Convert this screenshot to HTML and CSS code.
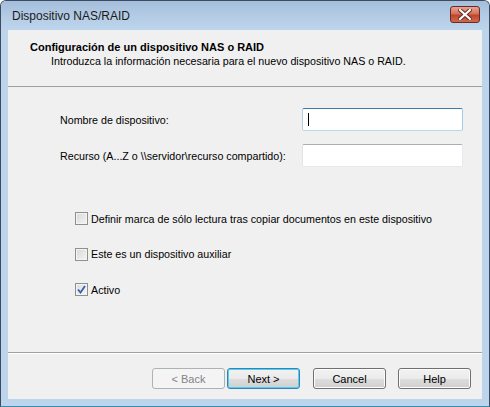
FILE: index.html
```html
<!DOCTYPE html>
<html lang="es">
<head>
    <meta charset="UTF-8">
    <title>Dispositivo NAS/RAID</title>
    <link rel="stylesheet" href="styles.css">
</head>
<body>

    <div class="window">
        <div class="titlebar">
            <span class="title">Dispositivo NAS/RAID</span>
            <button class="close-btn" type="button">
                <svg width="14" height="11" viewBox="0 0 14 11">
                    <path d="M2 1 L12 10 M12 1 L2 10" stroke="#5a2a22" stroke-width="4" stroke-linecap="square"/>
                    <path d="M2 1 L12 10 M12 1 L2 10" stroke="#ffffff" stroke-width="2.2" stroke-linecap="square"/>
                </svg>
            </button>
        </div>

        <div class="client">
            <div class="wizard-header">
                <div class="header-title">Configuración de un dispositivo NAS o RAID</div>
                <div class="header-sub">Introduzca la información necesaria para el nuevo dispositivo NAS o RAID.</div>
            </div>

            <div class="wizard-body">
                <div class="field-row">
                    <label for="name">Nombre de dispositivo:</label>
                    <div class="textbox focused" id="name"><span class="caret"></span></div>
                </div>
                <div class="field-row">
                    <label for="share">Recurso (A...Z o \\servidor\recurso compartido):</label>
                    <div class="textbox" id="share"></div>
                </div>

                <div class="checks">
                    <div class="check-row">
                        <span class="checkbox"></span>
                        <span>Definir marca de sólo lectura tras copiar documentos en este dispositivo</span>
                    </div>
                    <div class="check-row">
                        <span class="checkbox"></span>
                        <span>Este es un dispositivo auxiliar</span>
                    </div>
                    <div class="check-row">
                        <span class="checkbox checked">
                            <svg width="9" height="9" viewBox="0 0 9 9">
                                <path d="M1 4.5 L3.5 7.5 L8 1" fill="none" stroke="#3a5fb0" stroke-width="1.8"/>
                            </svg>
                        </span>
                        <span>Activo</span>
                    </div>
                </div>
            </div>

            <div class="wizard-footer">
                <button class="btn" type="button" disabled>&lt; Back</button>
                <button class="btn default" type="button">Next &gt;</button>
                <button class="btn gap" type="button">Cancel</button>
                <button class="btn gap" type="button">Help</button>
            </div>
        </div>
    </div>

</body>
</html>
```

FILE: styles.css
```css
body {
    margin: 0;
    background-color: #fff;
    font-family: "Liberation Sans", Arial, sans-serif;
    font-size: 10.7px;
    color: #000;
}

.window {
    box-sizing: border-box;
    width: 490px;
    height: 407px;
    border: 1px solid #3c4c60;
    border-bottom-color: #3a8fa8;
    border-radius: 6px 6px 0 0;
    background-color: #bcd4ec;
    display: flex;
    flex-direction: column;
    overflow: hidden;
}

.titlebar {
    height: 29px;
    flex: none;
    display: flex;
    align-items: center;
    padding: 0 9px 0 11px;
    background: linear-gradient(#a4bedb, #b6cde6 60%, #bcd4ec);
}

.title {
    flex: 1;
    font-size: 12px;
    color: #1a1a1a;
    padding-top: 1px;
}

.close-btn {
    width: 30px;
    height: 17px;
    margin-top: -3px;
    padding: 0;
    border: 1px solid #6a2a22;
    border-radius: 3px;
    background: linear-gradient(#e6a593, #d5705a 45%, #c0452c 55%, #d06a4e);
    display: flex;
    align-items: center;
    justify-content: center;
}

.client {
    flex: 1;
    margin: 0 7px 7px 7px;
    background-color: #f0f0f0;
    display: flex;
    flex-direction: column;
}

.wizard-header {
    height: 57px;
    flex: none;
    padding: 11px 0 0 22px;
    box-sizing: border-box;
    border-bottom: 1px solid #a0a0a0;
}

.header-title {
    font-weight: bold;
    font-size: 11px;
}

.header-sub {
    margin: 2px 0 0 21px;
}

.wizard-body {
    flex: 1;
    padding: 21px 19px 0 52px;
    border-bottom: 1px solid #a0a0a0;
}

.field-row {
    display: flex;
    align-items: center;
    justify-content: space-between;
    height: 23px;
    margin-bottom: 13px;
}

.textbox {
    box-sizing: border-box;
    width: 161px;
    height: 23px;
    background-color: #fff;
    border: 1px solid #abadb3;
    border-color: #abadb3 #e3e9ef #e3e9ef #e2e3ea;
    border-radius: 2px;
    display: flex;
    align-items: center;
    padding-left: 5px;
}

.textbox.focused {
    border-color: #3d7bad #a4c9e3 #b7d9ed #b5cfe7;
}

.caret {
    width: 1px;
    height: 13px;
    background-color: #000;
}

.checks {
    padding: 32px 0 0 15px;
    display: flex;
    flex-direction: column;
    gap: 22.5px;
}

.check-row {
    display: flex;
    align-items: center;
    gap: 3px;
    height: 13px;
}

.checkbox {
    box-sizing: border-box;
    width: 13px;
    height: 13px;
    border: 1px solid #8f8f8f;
    background: linear-gradient(135deg, #d8d8d8, #f4f4f4);
    box-shadow: inset 0 0 0 1px #f4f4f4;
    display: flex;
    align-items: center;
    justify-content: center;
}

.checkbox.checked {
    background: linear-gradient(135deg, #dcdcdc, #f6f6f6);
}

.wizard-footer {
    height: 46px;
    flex: none;
    display: flex;
    align-items: flex-start;
    padding: 14px 0 0 144px;
    box-sizing: border-box;
    border-top: 1px solid #fff;
}

.btn {
    box-sizing: border-box;
    width: 73px;
    height: 21px;
    margin-right: 2px;
    font-family: "Liberation Sans", Arial, sans-serif;
    font-size: 11px;
    color: #000;
    border: 1px solid #707070;
    border-radius: 3px;
    background: linear-gradient(#f2f2f2, #ebebeb 50%, #dddddd 51%, #cfcfcf);
    box-shadow: inset 0 0 0 1px #fcfcfc;
    padding: 0;
}

.btn.default {
    border-color: #3c7fb1;
    box-shadow: inset 0 0 0 1px #48d3f7;
}

.btn:disabled {
    color: #838383;
    border-color: #adb2b5;
    background: #f4f4f4;
    box-shadow: none;
}

.btn.gap {
    margin-left: 11px;
    margin-right: 1px;
}
```
